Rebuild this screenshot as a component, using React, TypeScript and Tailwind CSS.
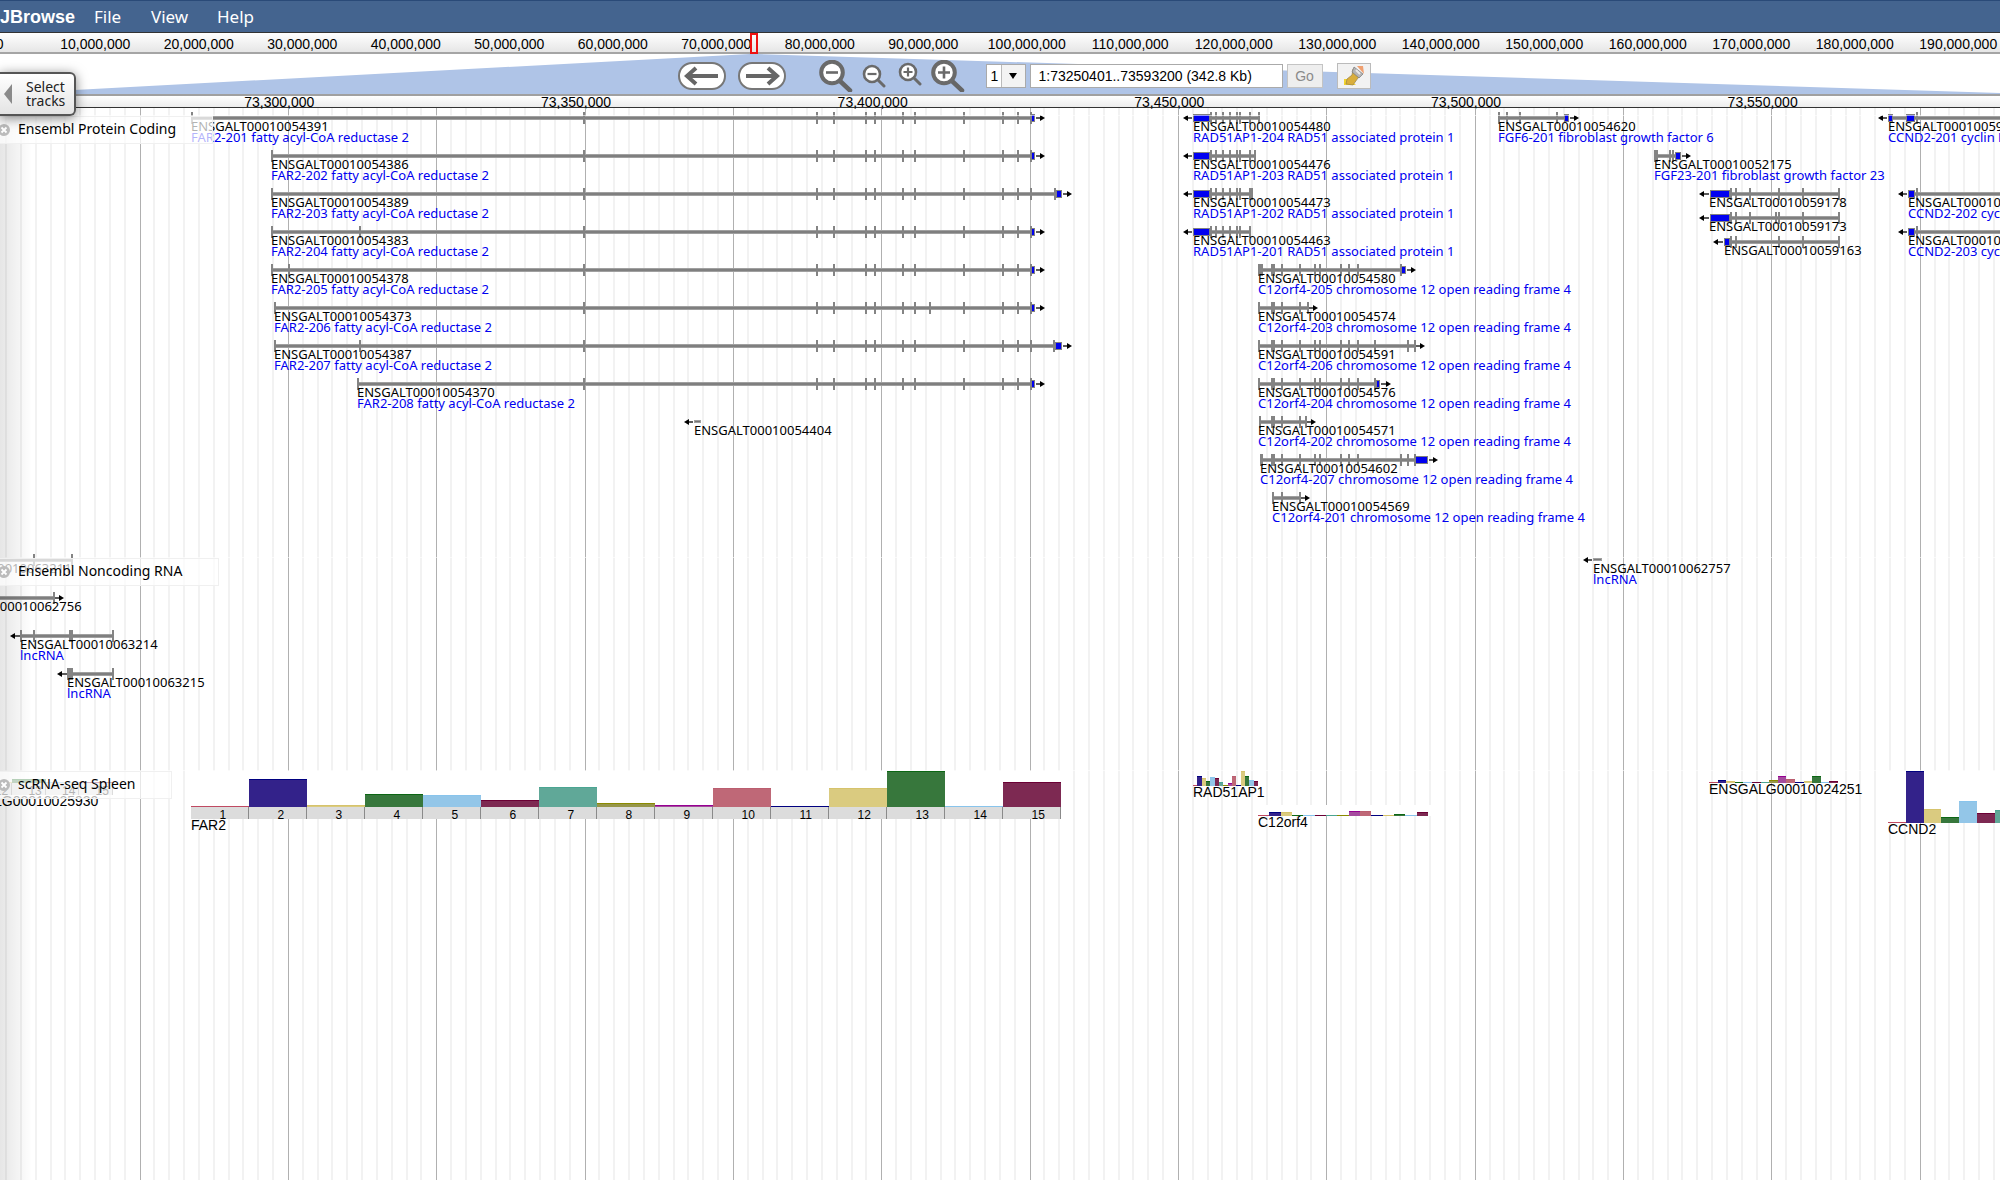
import React from "react";

type Box = [number, number];

interface Feature {
  id: string;
  note?: string;
  x: number;
  y: number;
  line?: Box;
  ticks?: number[];
  boxes?: Box[];
  stub?: Box;
  dir: 1 | -1;
  tip?: number;
}

const FAR2 = [584, 817, 834, 866, 875, 903, 915, 964, 1003, 1018];
const RAD = [1211, 1216, 1223, 1230, 1237, 1240];
const C12 = [1272, 1274, 1282, 1300];
const C12B = [...C12, 1315, 1320, 1341, 1349, 1358];

function far2(id: string, n: number, x: number, y: number, long = 0, extra: number[] = []): Feature {
  return {
    id: `ENSGALT000100${id}`,
    note: `FAR2-${n} fatty acyl-CoA reductase 2`,
    x,
    y,
    line: [x + 1, long || 1031],
    ticks: [x + 1, ...extra, ...FAR2, 1031, ...(long ? [long] : [])],
    boxes: [long ? [long + 1, 1062] : [1031, 1035]],
    dir: 1,
    tip: long ? 1072 : 1045,
  };
}

function rad51(id: string, n: number, y: number, end: number, extra: number[]): Feature {
  return {
    id: `ENSGALT000100${id}`,
    note: `RAD51AP1-${n} RAD51 associated protein 1`,
    x: 1193,
    y,
    line: [1209, end],
    ticks: [...RAD, ...extra],
    boxes: [[1193, 1210]],
    dir: -1,
    tip: 1183,
  };
}

function c12(id: string, n: number, x: number, y: number, ticks: number[], tip: number, box?: Box): Feature {
  return {
    id: `ENSGALT000100${id}`,
    note: `C12orf4-${n} chromosome 12 open reading frame 4`,
    x,
    y,
    line: [x + 1, ticks[ticks.length - 1]],
    ticks,
    boxes: box ? [box] : [],
    dir: 1,
    tip,
  };
}

const codingFeatures: Feature[] = [
  far2("54391", 201, 191, 10),
  far2("54386", 202, 271, 48),
  far2("54389", 203, 271, 86, 1055),
  far2("54383", 204, 271, 124, 0, [360]),
  far2("54378", 205, 271, 162, 0, [289]),
  far2("54373", 206, 274, 200, 0, [930]),
  far2("54387", 207, 274, 238, 1054, [360]),
  far2("54370", 208, 357, 276),
  { id: "ENSGALT00010054404", x: 694, y: 314, stub: [694, 700], dir: -1, tip: 684 },
  rad51("54480", 204, 10, 1259, [1250, 1259]),
  rad51("54476", 203, 48, 1255, [1250, 1255]),
  rad51("54473", 202, 86, 1252, [1250, 1252]),
  rad51("54463", 201, 124, 1250, [1250]),
  c12("54580", 205, 1258, 162, [1259, 1260, 1262, ...C12B, 1401], 1416, [1401, 1406]),
  c12("54574", 203, 1258, 200, [1259, ...C12, 1308], 1318),
  c12("54591", 206, 1258, 238, [1259, ...C12B, 1375, 1408, 1415], 1425),
  c12("54576", 204, 1258, 276, [1259, ...C12B, 1375], 1391, [1376, 1380]),
  c12("54571", 202, 1258, 314, [1260, ...C12, 1306], 1316),
  c12("54602", 207, 1260, 352, [1261, 1262, ...C12B, 1401, 1408, 1415], 1438, [1415, 1428]),
  c12("54569", 201, 1272, 390, [1273, 1282, 1300], 1310),
  {
    id: "ENSGALT00010054620", note: "FGF6-201 fibroblast growth factor 6", x: 1498, y: 10,
    line: [1498, 1565], ticks: [1499, 1507, 1520, 1557], boxes: [[1564, 1569]], dir: 1, tip: 1579,
  },
  {
    id: "ENSGALT00010052175", note: "FGF23-201 fibroblast growth factor 23", x: 1654, y: 48,
    line: [1654, 1675], ticks: [1655, 1657, 1670, 1673], boxes: [[1675, 1681]], dir: 1, tip: 1691,
  },
  {
    id: "ENSGALT00010059178", x: 1709, y: 86, line: [1730, 1839],
    ticks: [1731, 1736, 1750, 1779, 1803, 1839], boxes: [[1710, 1730]], dir: -1, tip: 1699,
  },
  {
    id: "ENSGALT00010059173", x: 1709, y: 110, line: [1730, 1839],
    ticks: [1731, 1736, 1750, 1776, 1779, 1803, 1839], boxes: [[1710, 1730]], dir: -1, tip: 1699,
  },
  {
    id: "ENSGALT00010059163", x: 1724, y: 134, line: [1730, 1839],
    ticks: [1731, 1736, 1779, 1803, 1839], boxes: [[1724, 1730]], dir: -1, tip: 1713,
  },
  {
    id: "ENSGALT00010059168", note: "CCND2-201 cyclin D2", x: 1888, y: 10, line: [1890, 2060],
    ticks: [1917], boxes: [[1888, 1893], [1906, 1915]], dir: -1, tip: 1878,
  },
  {
    id: "ENSGALT00010059165", note: "CCND2-202 cyclin D2", x: 1908, y: 86, line: [1914, 2060],
    ticks: [1917], boxes: [[1908, 1915]], dir: -1, tip: 1898,
  },
  {
    id: "ENSGALT00010059166", note: "CCND2-203 cyclin D2", x: 1908, y: 124, line: [1914, 2060],
    ticks: [1917], boxes: [[1908, 1915]], dir: -1, tip: 1898,
  },
];

const noncodingFeatures: Feature[] = [
  { id: "ENSGALT00010063211", x: -66, y: 2, line: [-66, 72], ticks: [34, 72], dir: -1 },
  { id: "ENSGALT00010062756", x: -56, y: 40, line: [-56, 54], ticks: [54], dir: 1, tip: 64 },
  {
    id: "ENSGALT00010063214", note: "lncRNA", x: 20, y: 78, line: [21, 113],
    ticks: [21, 34, 70, 72, 113], dir: -1, tip: 10,
  },
  {
    id: "ENSGALT00010063215", note: "lncRNA", x: 67, y: 116, line: [68, 113],
    ticks: [68, 70, 72, 113], dir: -1, tip: 57,
  },
  { id: "ENSGALT00010062757", note: "lncRNA", x: 1593, y: 2, stub: [1593, 1601], dir: -1, tip: 1583 },
];

interface Expression {
  gene: string;
  x: number;
  labelX?: number;
  top: number;
  width: number;
  height: number;
  values: number[];
  numbered?: boolean;
  masked?: boolean;
}

const expression: Expression[] = [
  {
    gene: "ENSGALG00010025930", x: -391, labelX: -55, top: 0, width: 504, height: 12, numbered: true, masked: true,
    values: [1, 2, 1, 2, 1, 1, 2, 1, 1, 1, 1, 1, 4, 1, 1],
  },
  {
    gene: "FAR2", x: 191, top: 0, width: 870, height: 36, numbered: true, masked: true,
    values: [1, 28, 2, 13, 12, 7, 20, 4, 2, 19, 1, 19, 36, 1, 25],
  },
  {
    gene: "RAD51AP1", x: 1193, top: 0, width: 65, height: 15,
    values: [1, 10, 8, 5, 9, 8, 4, 1, 3, 10, 1, 15, 10, 6, 5],
  },
  {
    gene: "C12orf4", x: 1258, top: 34, width: 170, height: 11, masked: true,
    values: [1, 4, 4, 1, 1, 1, 1, 1, 5, 5, 1, 1, 2, 1, 4],
  },
  {
    gene: "ENSGALG00010024251", x: 1709, top: 0, width: 129, height: 12,
    values: [1, 3, 2, 1, 1, 1, 1, 3, 7, 4, 1, 2, 7, 1, 2],
  },
  {
    gene: "CCND2", x: 1888, top: 0, width: 267, height: 52, masked: true,
    values: [1, 52, 14, 6, 22, 10, 13, 2, 1, 1, 1, 1, 1, 1, 1],
  },
];

const barColors = [
  "bg-[#bf6877] border-[#c04a62]",
  "bg-[#33228a] border-[#000080]",
  "bg-[#dacb80] border-[#d6c36c]",
  "bg-[#37773c] border-[#0c6614]",
  "bg-[#93c6e8] border-[#88c4ec]",
  "bg-[#7d2952] border-[#6b0035]",
  "bg-[#60a898] border-[#4aa592]",
  "bg-[#96964a] border-[#8a8a00]",
  "bg-[#a54b9e] border-[#960092]",
  "bg-[#bf6877] border-[#bb5e70]",
  "bg-[#33228a] border-[#000080]",
  "bg-[#dacb80] border-[#d6c36c]",
  "bg-[#37773c] border-[#0c6614]",
  "bg-[#93c6e8] border-[#88c4ec]",
  "bg-[#7d2952] border-[#6b0035]",
];

function Glyph({ f }: { f: Feature }) {
  const at = (v: number) => v - f.x;
  const edge =
    f.dir === 1
      ? Math.max(...(f.boxes ?? []).map((b) => b[1]), f.line ? f.line[1] : 0)
      : (f.boxes?.[0]?.[0] ?? f.stub?.[0] ?? f.line?.[0] ?? f.x);
  return (
    <svg className="block h-3 w-3 overflow-visible" aria-hidden="true">
      {f.line && (
        <>
          <rect x={at(f.line[0])} y={4} width={f.line[1] - f.line[0]} height={4} fill="#a0a0a0" />
          <rect x={at(f.line[0])} y={5} width={f.line[1] - f.line[0]} height={2} fill="#7f7f7f" />
        </>
      )}
      {f.ticks?.map((t, i) => (
        <rect key={i} x={at(t) - 1} y={0} width={2} height={12} fill="#848484" />
      ))}
      {f.boxes?.map(([a, b]) => (
        <rect key={a} x={at(a) + 0.5} y={2.5} width={b - a - 1} height={7} fill="#0000f0" stroke="#808080" />
      ))}
      {f.stub && (
        <rect x={at(f.stub[0]) + 0.5} y={4.5} width={f.stub[1] - f.stub[0]} height={2} fill="#777" stroke="#a0a0a0" />
      )}
      {f.tip !== undefined && (
        <>
          <path d={`M${at(edge) + f.dir} 6H${at(f.tip) - 3 * f.dir}`} stroke="#333" strokeWidth={1.6} />
          <path d={`M${at(f.tip)} 6l${-5 * f.dir} -3v6z`} fill="#000" />
        </>
      )}
    </svg>
  );
}

function FeatureItem({ f }: { f: Feature }) {
  return (
    <div className="absolute whitespace-nowrap" style={{ left: f.x, top: f.y - 6 }}>
      <Glyph f={f} />
      <div className="-mt-1 text-[13px] leading-3 text-black">{f.id}</div>
      {f.note && <div className="text-[13px] leading-[10px] text-[#0000f0]">{f.note}</div>}
    </div>
  );
}

function ExpressionItem({ e }: { e: Expression }) {
  return (
    <div className="absolute whitespace-nowrap font-['Liberation_Sans',Arial,sans-serif]" style={{ left: e.x, top: e.top }}>
      <div className={e.masked ? "-mx-1 bg-white px-1" : ""}>
        <div className="flex items-end" style={{ width: e.width, height: e.height }}>
          {e.values.map((v, i) => (
            <div key={i} className={`flex-1 border-t ${barColors[i]}`} style={{ height: v }} />
          ))}
        </div>
        {e.numbered && (
          <div className="flex bg-[#dcdcdc]" style={{ width: e.width }}>
            {e.values.map((_, i) => (
              <div key={i} className="h-3 flex-1 border-r border-[#8a8a8a] pt-0.5 text-xs leading-3 text-black">
                <span className="ml-[50%]">{i + 1}</span>
              </div>
            ))}
          </div>
        )}
      </div>
      <div className={`text-sm leading-3 text-black ${e.labelX !== undefined ? "relative" : ""}`}
        style={e.labelX !== undefined ? { left: e.labelX - e.x } : undefined}>
        {e.gene}
      </div>
    </div>
  );
}

function TrackLabel({ children }: { children: string }) {
  return (
    <div className="absolute left-0 top-0 z-10 flex h-7 items-center gap-2 border border-l-0 border-[#f0f0f0] bg-white/70 pr-9 text-sm leading-4 text-black">
      <button type="button" aria-label={`Close ${children}`} className="-ml-0.5">
        <svg className="block size-3" viewBox="0 0 12 12">
          <circle cx="6" cy="6" r="6" fill="#bbb" />
          <path d="M3.5 3.5l5 5M8.5 3.5l-5 5" stroke="#fff" strokeWidth="1.8" />
        </svg>
      </button>
      <h2 className="pb-0.5">{children}</h2>
    </div>
  );
}

function GridLines() {
  const spacing = 14.835;
  const lines = Array.from({ length: 180 }, (_, i) => i);
  return (
    <svg className="absolute inset-0 h-full w-full" aria-hidden="true">
      {lines.map((i) => {
        const major = i % 10 === 9;
        return (
          <rect
            key={i}
            x={Math.round(6 + i * spacing) - (major ? 0 : 1)}
            y={0}
            width={major ? 1 : 2}
            height="100%"
            fill={major ? "#b0b0b0" : "#f2f2f2"}
          />
        );
      })}
    </svg>
  );
}

function Lens({ sign, big }: { sign: "plus" | "minus"; big?: boolean }) {
  return (
    <svg className={big ? "block h-8 w-9" : "block h-6 w-6"} viewBox={big ? "0 0 36 32" : "0 0 24 24"} fill="none" stroke="#6a6a6a">
      {big ? (
        <>
          <path d="M22 21l10 9.5" strokeWidth="4.5" stroke="#666" strokeLinecap="round" />
          <circle cx="14" cy="12.5" r="10.8" strokeWidth="4" fill="#fff" />
          <path d={sign === "plus" ? "M8 12.5h12M14 6.5v12" : "M8 12.5h12"} strokeWidth="2.6" />
        </>
      ) : (
        <>
          <path d="M15 15l7 7" strokeWidth="3" strokeLinecap="round" />
          <circle cx="10" cy="10" r="8" strokeWidth="2.6" fill="#fff" />
          <path d={sign === "plus" ? "M5.5 10h9M10 5.5v9" : "M5.5 10h9"} strokeWidth="2.2" />
        </>
      )}
    </svg>
  );
}

function PanButton({ dir }: { dir: "left" | "right" }) {
  return (
    <button type="button" aria-label={`Pan ${dir}`} className="flex h-7 w-12 items-center justify-center rounded-full border-2 border-[#777] bg-white">
      <svg className="block h-5 w-9" viewBox="0 0 36 20" fill="none" stroke="#666" strokeWidth="4">
        <path d={dir === "left" ? "M34 10H3M12 2L3 10l9 8" : "M2 10h31M24 2l9 8-9 8"} />
      </svg>
    </button>
  );
}

const overviewTicks = Array.from({ length: 20 }, (_, i) => (i * 10000000).toLocaleString("en-US"));
const locationTicks = Array.from({ length: 6 }, (_, i) => (73300000 + i * 50000).toLocaleString("en-US"));

export default function App() {
  return (
    <div className="relative flex min-h-screen flex-col overflow-hidden bg-white font-['Noto_Sans','Open_Sans',sans-serif]">
      <nav className="flex h-[33px] items-center border-t border-b border-t-[#2a4a78] border-b-[#333] bg-[#44648f] text-[17px] leading-8 text-white">
        <a href="#" className="w-[94px] font-['Liberation_Sans',Arial,sans-serif] text-lg font-bold">JBrowse</a>
        <button type="button" className="w-[57px] text-left">File</button>
        <button type="button" className="w-[66px] text-left">View</button>
        <button type="button" className="text-left">Help</button>
      </nav>

      <div className="relative border-b-2 border-[#a5a5a5] bg-gradient-to-b from-white to-[#e6e6e6] font-['Liberation_Sans',Arial,sans-serif]">
        <div className="-ml-[60px] grid w-[calc(100%+70px)] grid-cols-20 pt-1 text-center text-sm leading-[15px] text-black">
          {overviewTicks.map((t, i) => (
            <div key={t} className={i === 0 ? "pl-4" : ""}>{t}</div>
          ))}
        </div>
        <div className="absolute -bottom-0.5 left-[37.5%] top-0 w-2 border-2 border-[#ee1111]" />
      </div>

      <div className="relative h-10">
        <svg className="absolute inset-0 h-full w-full" viewBox="0 0 2000 40" preserveAspectRatio="none" aria-hidden="true">
          <path d="M0 40L750 0H758L2000 39V40Z" fill="#afc4e7" />
        </svg>
        <div className="relative flex h-full items-center justify-center pl-12 pt-2 pb-1 font-['Liberation_Sans',Arial,sans-serif]">
          <div className="flex gap-3">
            <PanButton dir="left" />
            <PanButton dir="right" />
          </div>
          <div className="ml-8 flex items-start gap-2">
            <button type="button" aria-label="Zoom out 10x"><Lens sign="minus" big /></button>
            <button type="button" aria-label="Zoom out" className="pt-1"><Lens sign="minus" /></button>
            <button type="button" aria-label="Zoom in" className="ml-1 pt-0.5"><Lens sign="plus" /></button>
            <button type="button" aria-label="Zoom in 10x"><Lens sign="plus" big /></button>
          </div>
          <div className="relative ml-5">
            <select aria-label="Reference sequence" defaultValue="1" className="block h-6 w-10 appearance-none border border-[#aaa] bg-white pl-1 text-sm text-black">
              <option>1</option>
            </select>
            <span className="pointer-events-none absolute inset-y-px right-px flex w-6 items-center justify-center border-l border-[#bbb] bg-[#f3f3f3]">
              <svg className="block h-1.5 w-2" viewBox="0 0 8 6"><path d="M0 0h8L4 6z" fill="#000" /></svg>
            </span>
          </div>
          <input aria-label="Location" defaultValue="1:73250401..73593200 (342.8 Kb)" className="ml-1 h-6 w-[253px] border border-[#aaa] bg-white px-2 text-sm text-black" />
          <button type="button" className="ml-1 h-6 w-9 border border-[#c4c4c4] bg-[#eee] text-sm text-[#8a8a8a]">Go</button>
          <button type="button" aria-label="Highlight a region" className="ml-3.5 flex h-[26px] w-[34px] items-center justify-center border border-[#bbb] bg-[#f2f2f2]">
            <svg className="block size-5" viewBox="0 0 20 20">
              <path d="M0 13h5l7 6H0z" fill="#f2d32c" />
              <path d="M9 3L17 9l-3 3L9 19l-7-1 1-5 5-4z" fill="#d9ae3c" stroke="#9a8348" strokeWidth="0.7" />
              <path d="M10 1l9 7-4 4-7-6z" fill="#b5b5b5" stroke="#777" strokeWidth="0.7" />
              <path d="M12 4l4 4" stroke="#e8e8e8" strokeWidth="2" />
              <path d="M13 0h6l1 8z" fill="#f0a070" />
            </svg>
          </button>
        </div>
      </div>

      <div className="border-t-2 border-b border-t-[#a0a0a0] border-b-[#333] bg-gradient-to-b from-white to-[#ececec] font-['Liberation_Sans',Arial,sans-serif]">
        <div className="ml-[131px] grid h-[11px] w-[89%] grid-cols-6 text-center text-sm leading-[13px] text-black">
          {locationTicks.map((t) => (
            <div key={t}>{t}</div>
          ))}
        </div>
      </div>

      <main className="relative flex-1">
        <GridLines />
        <section className="relative h-[449px]">
          {codingFeatures.map((f) => <FeatureItem key={f.id} f={f} />)}
          <div className="absolute inset-x-0 top-[7px] border-t border-white/60">
            <TrackLabel>Ensembl Protein Coding</TrackLabel>
          </div>
        </section>
        <section className="relative h-[213px] border-t border-white/60">
          {noncodingFeatures.map((f) => <FeatureItem key={f.id} f={f} />)}
          <TrackLabel>Ensembl Noncoding RNA</TrackLabel>
        </section>
        <section className="relative h-[120px] border-t border-white/60">
          {expression.map((e) => <ExpressionItem key={e.gene} e={e} />)}
          <TrackLabel>scRNA-seq Spleen</TrackLabel>
        </section>
        <div className="pointer-events-none absolute inset-y-0 left-0 w-8 bg-gradient-to-r from-black/10 to-transparent" />
      </main>

      <button
        type="button"
        className="absolute left-0 top-[72px] z-20 flex h-11 w-[76px] items-center gap-3.5 rounded-r-md border-2 border-l-0 border-[#555] bg-gradient-to-b from-white to-[#e4e4e4] pl-1 text-left text-sm leading-[14px] text-[#222] shadow-[0_2px_12px_rgba(0,0,0,0.5)]"
      >
        <svg className="block h-5 w-2 shrink-0" viewBox="0 0 8 20"><path d="M8 0v20L0 10z" fill="#8a8a8a" /></svg>
        <span>Select<br />tracks</span>
      </button>
    </div>
  );
}
